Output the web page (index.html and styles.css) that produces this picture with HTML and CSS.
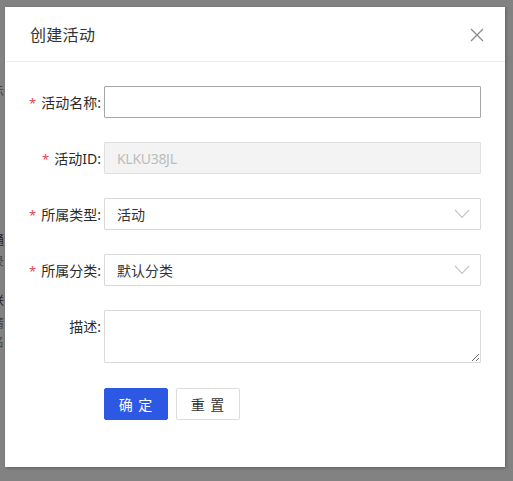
FILE: index.html
```html
<!DOCTYPE html>
<html lang="zh-CN">
<head>
<meta charset="utf-8">
<title>创建活动</title>
<link rel="stylesheet" href="styles.css">
</head>
<body>
<div class="page">
  <div class="peek peek-a">(</div>
  <div class="peek peek-b">2</div>
  <div class="peek peek-c">示</div>
  <div class="peek peek-d">通</div>
  <div class="peek peek-e">录</div>
  <div class="peek peek-f">联</div>
  <div class="peek peek-g">请</div>
  <div class="peek peek-h">名</div>
</div>
<div class="modal">
  <div class="modal-header">
    <span class="modal-title">创建活动</span>
    <svg class="close" width="14" height="14" viewBox="0 0 14 14"><path d="M1 1 L13 13 M13 1 L1 13" stroke="#8c8c8c" stroke-width="1.3" fill="none"/></svg>
  </div>
  <form class="modal-body">
    <div class="row">
      <label class="label"><span class="req">*</span>活动名称:</label>
      <input class="field field-focus" type="text">
    </div>
    <div class="row">
      <label class="label"><span class="req">*</span>活动ID:</label>
      <input class="field field-disabled" type="text" value="KLKU38JL" disabled>
    </div>
    <div class="row">
      <label class="label"><span class="req">*</span>所属类型:</label>
      <div class="field select"><span>活动</span>
        <svg class="chev" width="16" height="10" viewBox="0 0 16 10"><path d="M1 1 L8 8.5 L15 1" stroke="#c4c4c4" stroke-width="1.1" fill="none"/></svg>
      </div>
    </div>
    <div class="row">
      <label class="label"><span class="req">*</span>所属分类:</label>
      <div class="field select"><span>默认分类</span>
        <svg class="chev" width="16" height="10" viewBox="0 0 16 10"><path d="M1 1 L8 8.5 L15 1" stroke="#c4c4c4" stroke-width="1.1" fill="none"/></svg>
      </div>
    </div>
    <div class="row row-top">
      <label class="label label-top">描述:</label>
      <textarea class="field area"></textarea>
    </div>
    <div class="row actions">
      <button type="button" class="btn btn-primary">确 定</button>
      <button type="button" class="btn btn-default">重 置</button>
    </div>
  </form>
</div>
</body>
</html>
```

FILE: styles.css
```css
* { box-sizing: border-box; }
html, body { margin: 0; padding: 0; }
body {
  width: 513px;
  height: 481px;
  overflow: hidden;
  background: #828282;
  font-family: "Noto Sans", "Noto Sans CJK SC", sans-serif;
  position: relative;
}
.page { position: relative; width: 513px; height: 481px; }
.peek {
  position: absolute;
  left: -8px;
  font-size: 12px;
  line-height: 12px;
  color: #222;
}
.peek-a { top: 50px; }
.peek-b { top: 66px; color: #444; }
.peek-c { top: 86px; color: #444; }
.peek-d { top: 235px; }
.peek-e { top: 256px; color: #444; }
.peek-f { top: 295px; }
.peek-g { top: 318px; color: #444; }
.peek-h { top: 337px; color: #444; }

.modal {
  position: absolute;
  left: 5px;
  top: 7px;
  width: 500px;
  height: 460px;
  background: #fff;
  box-shadow: 1px 1px 3px rgba(0,0,0,0.25);
}
.modal-header {
  height: 55px;
  border-bottom: 1px solid #ececec;
  display: flex;
  align-items: center;
  justify-content: space-between;
  padding: 0 21px 0 25px;
}
.modal-title {
  font-size: 16px;
  color: #333;
  letter-spacing: 0.3px;
}
.close { display: block; margin-top: 1px; }

.modal-body {
  display: flex;
  flex-direction: column;
  gap: 24px;
  padding: 24px 24px 0 0;
}
.row {
  display: flex;
  align-items: center;
}
.row-top { align-items: flex-start; }
.label {
  width: 99px;
  padding-right: 3px;
  text-align: right;
  font-size: 14px;
  color: #2b2b2b;
  flex-shrink: 0;
}
.label-top { padding-top: 6px; }
.req {
  color: #e0475a;
  margin-right: 5px;
  font-size: 13px;
}
.field {
  flex: 1;
  height: 32px;
  border: 1px solid #d9d9d9;
  background: #fff;
  font-family: inherit;
  font-size: 14px;
  color: #333;
  padding: 0 12px;
  outline: none;
  border-radius: 1px;
}
.field-focus { border-color: #a6a6a6; }
.field-disabled {
  background: #f3f3f3;
  color: #bdbdbd;
  border-color: #e0e0e0;
  letter-spacing: -0.3px;
}
.select {
  display: flex;
  align-items: center;
  justify-content: space-between;
  padding-right: 10px;
}
.chev { display: block; }
.area {
  height: 53px;
  resize: vertical;
  padding: 6px 12px;
}
.actions { padding-left: 99px; gap: 8px; margin-top: 1px; }
.btn {
  height: 32px;
  width: 64px;
  font-family: inherit;
  font-size: 14px;
  border-radius: 2px;
  cursor: pointer;
  letter-spacing: 1px;
}
.btn-primary {
  background: #2d58e3;
  border: 1px solid #2d58e3;
  color: #fff;
}
.btn-default {
  background: #fff;
  border: 1px solid #dcdcdc;
  color: #333;
}
```
